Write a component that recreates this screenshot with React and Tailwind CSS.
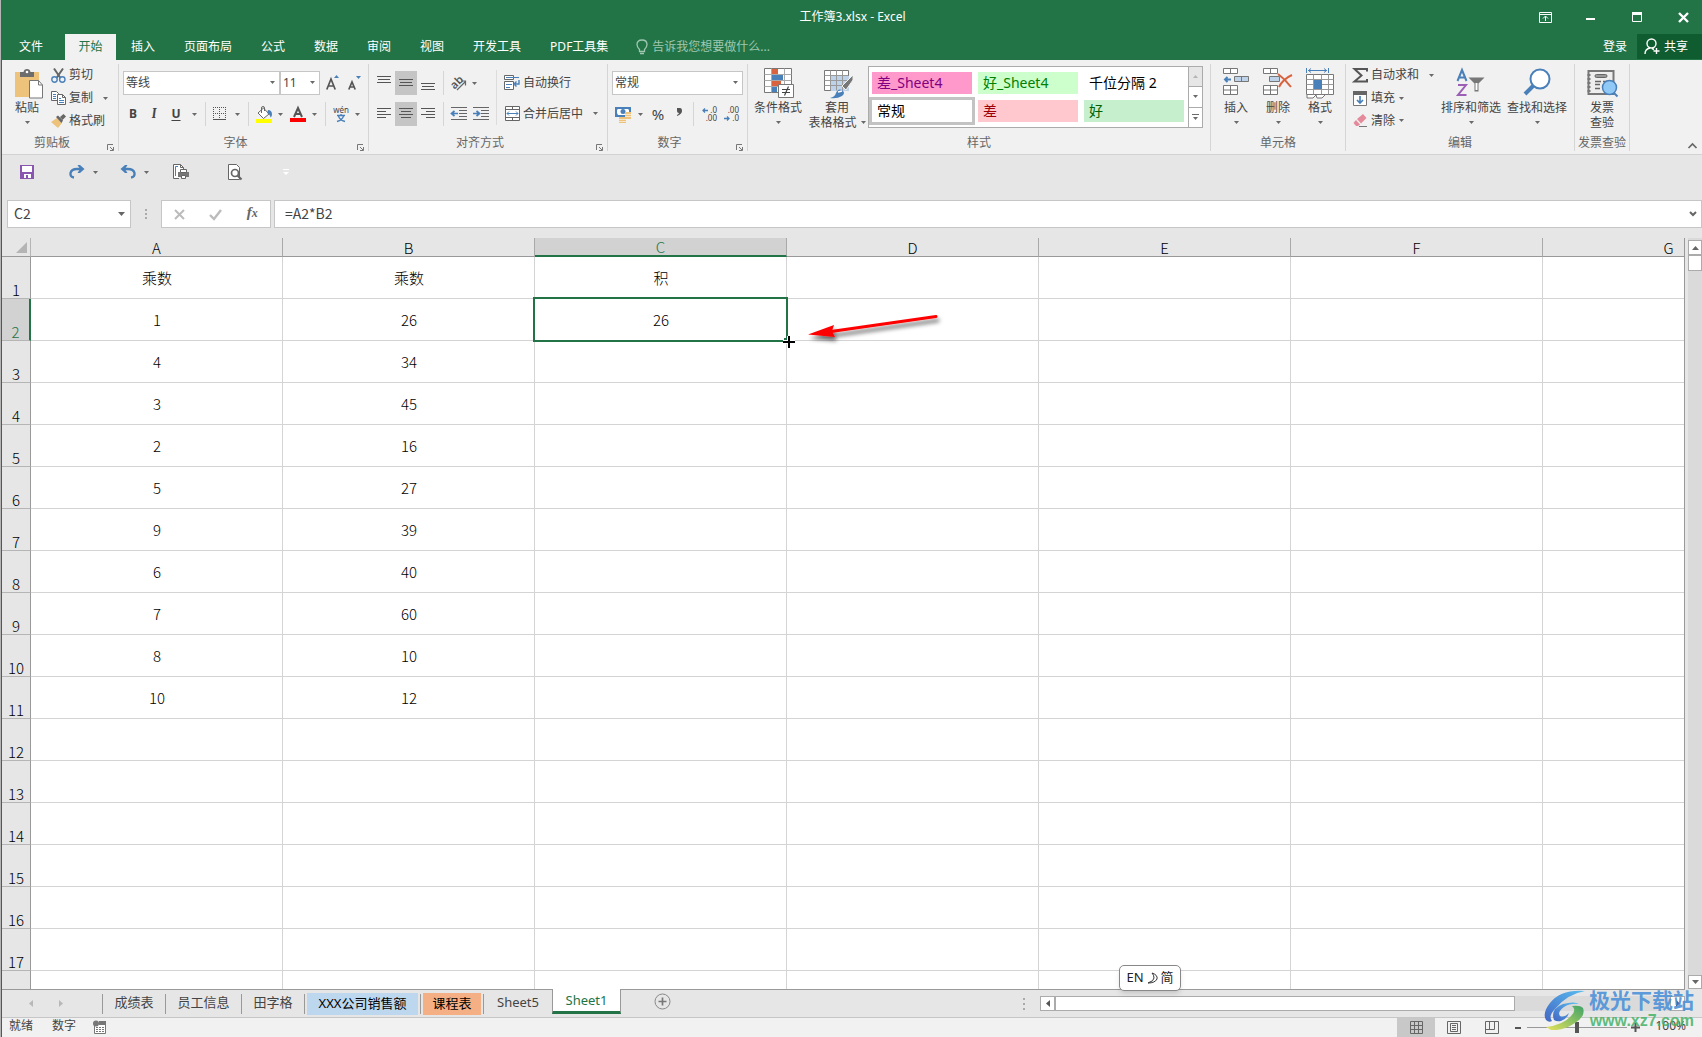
import React from "react";

const COLS = ["A", "B", "C", "D", "E", "F", "G"];
const DATA = [
  ["乘数", "乘数", "积"],
  ["1", "26", "26"],
  ["4", "34"],
  ["3", "45"],
  ["2", "16"],
  ["5", "27"],
  ["9", "39"],
  ["6", "40"],
  ["7", "60"],
  ["8", "10"],
  ["10", "12"],
  [], [], [], [], [], [], [],
];
const TABS = ["插入", "页面布局", "公式", "数据", "审阅", "视图", "开发工具", "PDF工具集"];

function Icon({ w = 16, h = 16, className = "", children }) {
  return (
    <svg width={w} height={h} viewBox={`0 0 ${w} ${h}`} fill="none" aria-hidden="true" className={`shrink-0 overflow-visible ${className}`}>
      {children}
    </svg>
  );
}

function Caret({ className = "" }) {
  return (
    <Icon w={5} h={3} className={className}>
      <path d="M0 0h5L2.5 3z" fill="#6a6a6a" />
    </Icon>
  );
}

function Drop({ label, className = "w-[14px]" }) {
  return (
    <button aria-label={label} className={`flex h-6 shrink-0 items-center justify-center ${className}`}>
      <Caret />
    </button>
  );
}

function Tool({ label, className = "w-[22px]", children }) {
  return (
    <button aria-label={label} className={`flex h-6 shrink-0 items-center justify-center ${className}`}>
      {children}
    </button>
  );
}

function Sep({ className = "mx-1" }) {
  return <span className={`h-6 w-px shrink-0 bg-[#d5d5d5] ${className}`} />;
}

function Group({ title, className, launcher, children }) {
  return (
    <section aria-label={title} className={`mt-1 flex h-[87px] shrink-0 flex-col border-r border-[#d5d5d5] ${className}`}>
      <div className="flex h-[68px]">{children}</div>
      <div className="relative flex h-[19px] items-center justify-center pt-[3px] text-[#666]">
        <span className={launcher ? "-translate-x-2" : ""}>{title}</span>
        {launcher && (
          <button aria-label={`${title}设置`} className="absolute right-1 bottom-0">
            <Icon w={7} h={7}>
              <path d="M.5 6V.5H6M3 3l3 3M6.5 3v3.5H3" stroke="#777" />
            </Icon>
          </button>
        )}
      </div>
    </section>
  );
}

function Big({ icon, lines, className, caret = true, inline = false }) {
  return (
    <button className={`flex shrink-0 flex-col items-center ${className}`}>
      <span className="flex h-9 items-start justify-center pt-1">{icon}</span>
      {lines.map((l, i) => (
        <span key={l} className="flex h-[15px] items-center leading-[15px] whitespace-nowrap">
          {l}
          {inline && i === lines.length - 1 && <Caret className="ml-1" />}
        </span>
      ))}
      {caret && <Caret className="mt-[6px]" />}
    </button>
  );
}

function Small({ icon, label, caret, gap = "ml-1" }) {
  return (
    <button className="flex h-[23px] items-center whitespace-nowrap">
      <span className="mr-[3px] flex w-4 justify-center">{icon}</span>
      {label}
      {caret && <Caret className={gap} />}
    </button>
  );
}

function Lines({ rows }) {
  return (
    <Icon w={14} h={16}>
      {rows.map(([y, x1, x2]) => (
        <path key={y} d={`M${x1} ${y}.5H${x2}`} stroke="#555" />
      ))}
    </Icon>
  );
}

const PasteIcon = (
  <Icon w={28} h={31}>
    <path d="M0 4h24v25H0z" fill="#edc27b" />
    <path d="M5 4h3.500Q9 1 12 1t3.500 3H19v5H5z" fill="#6d6d6d" />
    <circle cx="12" cy="4" r="1.300" fill="#fff" />
    <path d="M14.500 12.500h9l4 4.500v13h-13z" fill="#fff" stroke="#777" />
    <path d="M23.500 12.500V17h4" stroke="#777" />
  </Icon>
);
const CutIcon = (
  <Icon w={15} h={15}>
    <path d="M3 0.500 9.500 10M12 .5 5.500 10" stroke="#666" strokeWidth="2" />
    <circle cx="3.500" cy="11.500" r="2.700" stroke="#4a80b9" strokeWidth="1.400" />
    <circle cx="11.300" cy="11.500" r="2.700" stroke="#4a80b9" strokeWidth="1.400" />
  </Icon>
);
const CopyIcon = (
  <Icon w={15} h={14}>
    <path d="M.5.5h5l2 2v7h-7z" fill="#fff" stroke="#666" />
    <path d="M2 3.500h3M2 5.500h3M2 7.500h3" stroke="#4a80b9" />
    <path d="M6.500 3.500h5l3 3v7h-8z" fill="#fff" stroke="#666" />
    <path d="M11.500 3.500v3h3" stroke="#666" />
    <path d="M8 7.500h2M8 9.500h5M8 11.500h5" stroke="#4a80b9" />
  </Icon>
);
const BrushIcon = (
  <Icon w={15} h={14}>
    <path d="M0 8 6 4l5 5-4 5z" fill="#edc27b" />
    <path d="m5 3 2-1.500 5 5L10.500 9z" fill="#666" />
    <path d="m9 3 3.500-3L15 2.500 11.500 6z" fill="#666" />
  </Icon>
);
const BordersIcon = (
  <Icon w={14} h={14}>
    <path d="M0 .5h13M0 6.500h13M.5 0v12M6.500 0v12M12.500 0v12" stroke="#555" strokeDasharray="1 1" />
    <path d="M0 12.500h13" stroke="#555" />
  </Icon>
);
const FillIcon = (
  <Icon w={16} h={17}>
    <path d="m2 7 5.500-5 5.500 6-5.500 4.500z" fill="#fff" stroke="#666" />
    <path d="M5.500 7V2Q5.500.5 7 .5T8.500 2v3" stroke="#666" />
    <path d="M12 4q4 0 4 4.500 0 2-1.500 3Q14 8 11 7z" fill="#4a80b9" />
    <path d="M0 13h16v4H0z" fill="#ff0" />
  </Icon>
);
const OrientIcon = (
  <Icon w={17} h={16}>
    <text x="1" y="12" transform="rotate(-45 6 9)" fontSize="11" fontWeight="600" fontFamily="Noto Sans" fill="#555">ab</text>
    <path d="M7 15 15.500 6.500M15.500 10.500V6H11" stroke="#666" strokeWidth="1.200" />
  </Icon>
);
const IndentIcon = ({ right }) => (
  <Icon w={16} h={14}>
    <path d="M0 .5h16M8 3.500h8M8 6.500h8M8 9.500h8M0 12.500h16" stroke="#666" />
    {right ? <path d="M0 6.500h6M3.500 4l3 2.500L3.500 9" stroke="#4a80b9" strokeWidth="1.700" /> : <path d="M7 6.500H1M3.500 4l-3 2.500 3 2.500" stroke="#4a80b9" strokeWidth="1.700" />}
  </Icon>
);
const WrapIcon = (
  <Icon w={16} h={16}>
    <path d="M.5.5h9v4h-9zM.5 6.500h9v8h-9z" stroke="#666" fill="#fff" />
    <path d="M2 2.500h13M2 9.500h6M2 12.500h4" stroke="#4a80b9" />
    <path d="M15 5v4h-4M12.500 6.500 10 9l2.500 2.500" stroke="#4a80b9" strokeWidth="1.400" />
  </Icon>
);
const MergeIcon = (
  <Icon w={15} h={15}>
    <path d="M.5.5h14v14H.5zM.5 3.500h14M.5 11.500h14M7.500.5v3M7.500 11.500v3" stroke="#666" fill="#fff" />
    <path d="M2 7.500h11M4 5.500l-2 2 2 2M11 5.500l2 2-2 2" stroke="#4a80b9" />
  </Icon>
);
const MoneyIcon = (
  <Icon w={17} h={17}>
    <path d="M0 1h16v10H0z" fill="#4a80b9" />
    <path d="M3 3h10l1 1v3l-1 2H3L2 7V4z" fill="#fff" />
    <circle cx="8" cy="5.500" r="2.500" fill="#4a80b9" />
    <path d="M10 6h6v7h-6zM4 11h7v6H4z" fill="#edc27b" />
    <path d="M10 8.500h6M10 10.500h6M4 13.500h7M4 15.500h7" stroke="#fff" strokeWidth=".6" />
  </Icon>
);
const DecimalIcon = ({ less }) => (
  <Icon w={16} h={14}>
    <text x="16" y="6" textAnchor="end" fontSize="8" fontFamily="Noto Sans" fill="#444">{less ? ".00" : ".0"}</text>
    <text x="16" y="14" textAnchor="end" fontSize="8" fontFamily="Noto Sans" fill="#444">{less ? ".0" : ".00"}</text>
    {less ? <path d="M1 11.500h5M4 9.500l2 2-2 2" stroke="#4a80b9" strokeWidth="1.300" /> : <path d="M7 3.500H2M4 1.500l-2 2 2 2" stroke="#4a80b9" strokeWidth="1.300" />}
  </Icon>
);
const CondIcon = (
  <Icon w={30} h={30} className="ml-[2px]">
    <path d="M.5.5h27v24H.5z" fill="#fff" stroke="#777" />
    <path d="M8 1h6v5H8zM8 13h9v5H8z" fill="#d9623f" />
    <path d="M8 7h11v5H8zM8 19h5v5H8z" fill="#4a80b9" />
    <path d="M.5 6.500h27M.5 12.500h27M.5 18.500h27M7.500.5v24M20.500.5v24" stroke="#aaa" />
    <path d="M14.500 16.500h15v13h-15z" fill="#fff" stroke="#777" />
    <path d="M18 21.500h8M18 24.500h8M24.500 18.500l-4 9" stroke="#444" strokeWidth="1.200" />
  </Icon>
);
const TableIcon = (
  <Icon w={30} h={29} className="mt-[2px] ml-1">
    <path d="M.5.5h24v20H.5z" fill="#fff" stroke="#777" />
    <path d="M7 6h18v15H7z" fill="#bed3ea" />
    <path d="M.5 5.500h24M.5 10.500h24M.5 15.500h24M6.500.5v20M12.500.5v20M18.500.5v20" stroke="#999" />
    <path d="M29 5 18 16l4 4 7-10z" fill="#777" stroke="#f1f1f1" />
    <path d="M6 28q5-1 6-5 2-5 6-3 4 3 0 6-5 3-12 2z" fill="#4a80b9" />
    <path d="m14 22 4-1" stroke="#fff" strokeWidth="1.500" />
  </Icon>
);
const InsertIcon = (
  <Icon w={26} h={28}>
    <path d="M.5.5h14v5H.5zM7.500.5v5M.5 17.500h14v9H.5zM.5 22h14M7.500 17.500v9" stroke="#777" fill="#fff" />
    <path d="M11.500 8.500h14v5h-14zM18.500 8.500v5" stroke="#777" fill="#bed3ea" />
    <path d="M8 11.500H2M4.500 9 2 11.500 4.500 14" stroke="#4a80b9" strokeWidth="2" />
  </Icon>
);
const DeleteIcon = (
  <Icon w={30} h={28}>
    <path d="M.5.5h14v5H.5zM7.500.5v5M.5 17.500h14v9H.5zM.5 22h14M7.500 17.500v9" stroke="#777" fill="#fff" />
    <path d="M6.500 8.500h10v5h-10z" stroke="#777" fill="#bed3ea" />
    <path d="M15 6q7 5 13 13M29 7q-9 4-13 12" stroke="#d9623f" strokeWidth="2" />
  </Icon>
);
const FormatIcon = (
  <Icon w={28} h={32}>
    <path d="M.5 0v5M22.500 0v5M2 2.500h19M5 .5l-2.500 2L5 4.500M18 .5l2.500 2-2.500 2" stroke="#4a80b9" />
    <path d="M.5 6.500h27v20h-27z" fill="#fff" stroke="#777" />
    <path d="M.5 11.500h27M.5 21.500h27M7.500 6.500v20M15.500 6.500v20M22.500 6.500v20M.5 16.500h27" stroke="#999" />
    <path d="M8 12h8v9H8z" fill="#4a80b9" />
    <path d="M1 27v3h6l3-3 1 3h5l3-3" stroke="#777" fill="#fff" />
  </Icon>
);
const SigmaIcon = (
  <Icon w={15} h={15}>
    <path d="M14 3.500V1H1.500l7 6.500-7 6H14V11" stroke="#555" strokeWidth="2" />
  </Icon>
);
const FillDownIcon = (
  <Icon w={14} h={15}>
    <path d="M.5.5h13v14H.5z" fill="#fff" stroke="#777" />
    <path d="M0 0h14v4H0z" fill="#666" />
    <path d="M7 5v7M4 9l3 3 3-3" stroke="#4a80b9" strokeWidth="1.700" />
  </Icon>
);
const EraserIcon = (
  <Icon w={15} h={13}>
    <path d="m4 5 6-5 3.500 4L8 9.500z" fill="#e58a9a" />
    <path d="m3 6 4 4.500L5 12H3L.5 9z" fill="#e58a9a" />
    <path d="M6 12.500h8" stroke="#777" />
  </Icon>
);
const SortIcon = (
  <Icon w={30} h={28}>
    <path d="M1.500 13 6 2l4.500 11M3 9.500h6" stroke="#4a80b9" strokeWidth="2" />
    <path d="M2 17h8L2 27h8.500" stroke="#9b5fb5" strokeWidth="2" />
    <path d="M12.500 9.500h16l-6 6v8h-4v-8z" fill="#777" />
    <path d="M19.500 15h2v7h-2z" fill="#fff" />
  </Icon>
);
const FindIcon = (
  <Icon w={28} h={28}>
    <path d="M11 17 2 26" stroke="#4a80b9" strokeWidth="4" />
    <circle cx="17" cy="11" r="9.500" fill="#fff" stroke="#4a80b9" strokeWidth="2" />
  </Icon>
);
const InvoiceIcon = (
  <Icon w={31} h={28} className="mt-px">
    <path d="M1.500 2h25v23h-25z" fill="#eee" stroke="#777" strokeWidth="2" />
    <path d="M2 5v18" stroke="#777" strokeWidth="3" strokeDasharray="2 2" />
    <rect x="8" y="5.500" width="12" height="3" rx="1.500" fill="#999" stroke="#666" />
    <path d="M8 12.500h6M16 12.500h4M8 15.500h5M8 19.500h5" stroke="#666" strokeWidth="1.500" />
    <circle cx="22.500" cy="18.500" r="7" fill="#90c8f6" stroke="#4a80b9" strokeWidth="1.500" />
    <path d="m27 24 3.500 3.500" stroke="#4a80b9" strokeWidth="2" />
  </Icon>
);

function TitleBar() {
  return (
    <div className="bg-[#227447] text-white">
      <div className="grid h-[34px] grid-cols-[1fr_auto_1fr] items-center">
        <span />
        <h1 className="pl-[2px] text-[12px]">工作簿3.xlsx - Excel</h1>
        <div className="flex items-center justify-end">
          <button aria-label="功能区显示选项" className="flex w-[46px] justify-center">
            <Icon w={13} h={11}>
              <path d="M.5.5h12v10H.5zM.5 2.500h12M6.500 9V4.500M4 6.500 6.500 4 9 6.500" stroke="#fff" />
            </Icon>
          </button>
          <button aria-label="最小化" className="flex w-[46px] justify-center">
            <Icon w={10} h={10}><path d="M0 7h9" stroke="#fff" strokeWidth="2" /></Icon>
          </button>
          <button aria-label="最大化" className="flex w-[46px] justify-center">
            <Icon w={10} h={10}><path d="M.5.5h9v9h-9z" stroke="#fff" /><path d="M0 1.500h10" stroke="#fff" strokeWidth="3" /></Icon>
          </button>
          <button aria-label="关闭" className="ml-1 flex w-[38px] justify-center">
            <Icon w={11} h={11}><path d="m1 1 9 9M10 1l-9 9" stroke="#fff" strokeWidth="2.400" /></Icon>
          </button>
        </div>
      </div>
      <div className="flex h-[26px] items-stretch">
        <button className="w-16 pr-1">文件</button>
        <button className="w-[51px] bg-[#f1f1f1] text-[#227447]">开始</button>
        <nav className="flex items-stretch gap-px pl-px">
          {TABS.map((t) => (
            <button key={t} className="px-[14px] whitespace-nowrap">{t}</button>
          ))}
        </nav>
        <label className="ml-[14px] flex items-center gap-1 text-[#9fc7b0]">
          <Icon w={12} h={16}>
            <path d="M3.500 10.500Q1 8 1 5.500 1 1 6 1t5 4.500Q11 8 8.500 10.500v2h-5z" stroke="#9fc7b0" strokeWidth="1.300" />
            <path d="M4 14.500h4" stroke="#9fc7b0" strokeWidth="1.500" />
          </Icon>
          <input aria-label="告诉我您想要做什么" placeholder="告诉我您想要做什么..." className="w-40 bg-transparent outline-none placeholder:text-[#9fc7b0]" />
        </label>
        <div className="ml-auto flex items-stretch">
          <button className="px-[10px]">登录</button>
          <button className="mb-px flex w-[65px] items-center gap-1 bg-[#0e5c2f] pl-[7px]">
            <Icon w={16} h={17}>
              <circle cx="7.500" cy="5.500" r="4.500" stroke="#fff" strokeWidth="1.400" />
              <path d="M1 16q0-5 5-6M8 10.500l2 1M12.500 10v6M9.500 13h6" stroke="#fff" strokeWidth="1.400" />
            </Icon>
            共享
          </button>
        </div>
      </div>
    </div>
  );
}

const boxSelect = "h-6 w-full appearance-none border border-[#c6c6c6] bg-white px-[2px] text-[12px] text-[#444] outline-none";

function Combo({ label, value, className }) {
  return (
    <div className={`relative ${className}`}>
      <select aria-label={label} className={boxSelect} defaultValue={value}>
        <option>{value}</option>
      </select>
      <Caret className="pointer-events-none absolute top-[10px] right-[5px]" />
    </div>
  );
}

const GALLERY = [
  ["差_Sheet4", "bg-[#ff99cc] text-[#800080]"],
  ["好_Sheet4", "bg-[#ccffcc] text-[#008000]"],
  ["千位分隔 2", "bg-white text-black"],
  ["常规", "bg-white text-black outline-3 outline-[#c3c3c3]"],
  ["差", "bg-[#ffc7ce] text-[#9c0006]"],
  ["好", "bg-[#c6efce] text-[#006100]"],
];

function Ribbon() {
  return (
    <div className="flex h-[95px] overflow-hidden border-b border-[#d2d2d2] bg-[#f1f1f1]">
      <Group title="剪贴板" launcher className="w-[117px]">
        <Big icon={<span className="pl-1">{PasteIcon}</span>} lines={["粘贴"]} className="ml-[6px] w-[38px]" />
        <div className="ml-1 flex flex-col items-start">
          <Small icon={CutIcon} label="剪切" />
          <Small icon={CopyIcon} label="复制" caret gap="ml-[10px]" />
          <Small icon={BrushIcon} label="格式刷" />
        </div>
      </Group>

      <Group title="字体" launcher className="w-[250px]">
        <div className="flex flex-col gap-[7px] pt-[7px] pl-1">
          <div className="flex">
            <Combo label="字体" value="等线" className="w-[157px]" />
            <Combo label="字号" value="11" className="w-10" />
            <Tool label="增大字号" className="ml-[2px] w-5">
              <Icon w={13} h={16}>
                <path d="M.8 14.500 5 4l4.200 10.500M2.500 11h5.200" stroke="#555" strokeWidth="1.700" />
                <path d="m8 3 2.500-3L13 3z" fill="#4a80b9" />
              </Icon>
            </Tool>
            <Tool label="减小字号" className="ml-[2px] w-5">
              <Icon w={13} h={16}>
                <path d="M.8 14.500 4 7l3.200 7.500M2 12h4" stroke="#555" strokeWidth="1.700" />
                <path d="m8 1 2.500 3L13 1z" fill="#4a80b9" />
              </Icon>
            </Tool>
          </div>
          <div className="flex">
            <Tool label="加粗" className="w-5"><b>B</b></Tool>
            <Tool label="倾斜"><i className="font-serif text-[13px] font-bold">I</i></Tool>
            <Tool label="下划线"><u className="font-bold underline-offset-2">U</u></Tool>
            <Drop label="下划线类型" />
            <Sep className="mr-1 ml-1" />
            <Tool label="边框" className="w-5">{BordersIcon}</Tool>
            <Drop label="边框类型" />
            <Sep className="mr-[5px] ml-1" />
            <Tool label="填充颜色" className="w-5">{FillIcon}</Tool>
            <Drop label="填充颜色列表" className="w-[13px]" />
            <Tool label="字体颜色" className="ml-px w-5">
              <Icon w={16} h={15}>
                <path d="m4 10 4-9 4 9M5.500 7h5" stroke="#555" strokeWidth="2" />
                <path d="M0 11h16v4H0z" fill="#f00" />
              </Icon>
            </Tool>
            <Drop label="字体颜色列表" className="w-[13px]" />
            <Sep className="mr-[5px] ml-1" />
            <Tool label="拼音" className="w-5">
              <Icon w={16} h={16}>
                <text x="8" y="7" textAnchor="middle" fontSize="8" fontFamily="Noto Sans" fill="#444">wén</text>
                <path d="M4 9.500h8M8 8v2M5.500 10q1 4 6.500 5.500M10.500 10q-1 4-6.500 5.500" stroke="#4a80b9" strokeWidth="1.300" />
              </Icon>
            </Tool>
            <Drop label="拼音选项" className="w-[13px]" />
          </div>
        </div>
      </Group>

      <Group title="对齐方式" launcher className="w-[239px]">
        <div className="flex flex-col gap-[7px] pt-[7px] pl-1">
          <div className="flex">
            <Tool label="顶端对齐"><Lines rows={[[1, 0, 14], [4, 1, 13], [7, 0, 14]]} /></Tool>
            <Tool label="垂直居中" className="w-[22px] bg-[#c5c5c5]"><Lines rows={[[4, 0, 14], [7, 1, 13], [10, 0, 14]]} /></Tool>
            <Tool label="底端对齐"><Lines rows={[[8, 0, 14], [11, 1, 13], [14, 0, 14]]} /></Tool>
            <Sep className="mx-1" />
            <Tool label="方向" className="w-5">{OrientIcon}</Tool>
            <Drop label="方向列表" className="w-[13px]" />
          </div>
          <div className="flex">
            <Tool label="左对齐"><Lines rows={[[2, 0, 14], [5, 0, 9], [8, 0, 14], [11, 0, 9]]} /></Tool>
            <Tool label="居中" className="w-[22px] bg-[#c5c5c5]"><Lines rows={[[2, 0, 14], [5, 2, 12], [8, 0, 14], [11, 2, 12]]} /></Tool>
            <Tool label="右对齐"><Lines rows={[[2, 0, 14], [5, 5, 14], [8, 0, 14], [11, 5, 14]]} /></Tool>
            <Sep className="mx-1" />
            <Tool label="减少缩进"><IndentIcon /></Tool>
            <Tool label="增加缩进"><IndentIcon right /></Tool>
          </div>
        </div>
        <span className="mt-[6px] ml-1 h-[55px] w-px bg-[#dcdcdc]" />
        <div className="ml-[7px] flex flex-col items-start gap-2 pt-[7px]">
          <Small icon={WrapIcon} label="自动换行" />
          <Small icon={MergeIcon} label="合并后居中" caret gap="ml-[10px]" />
        </div>
      </Group>

      <Group title="数字" launcher className="w-[140px]">
        <div className="flex flex-col gap-[7px] pt-[7px] pl-1">
          <Combo label="数字格式" value="常规" className="w-[131px]" />
          <div className="flex">
            <Tool label="会计数字格式">{MoneyIcon}</Tool>
            <Drop label="货币列表" className="w-[13px]" />
            <Tool label="百分比"><span className="text-[15px]">%</span></Tool>
            <Tool label="千位分隔" className="w-5">
              <Icon w={6} h={9} className="-mt-1"><path d="M1 0h3q2 0 2 3 0 3-5 5v-1q2-1 2-2-2 0-2-2z" fill="#555" /></Icon>
            </Tool>
            <Sep className="mr-1 ml-1" />
            <Tool label="增加小数位数"><DecimalIcon /></Tool>
            <Tool label="减少小数位数"><DecimalIcon less /></Tool>
          </div>
        </div>
      </Group>

      <Group title="样式" className="w-[463px]">
        <Big icon={CondIcon} lines={["条件格式"]} className="ml-[2px] w-14" />
        <Big icon={TableIcon} lines={["套用", "表格格式"]} inline caret={false} className="w-[62px]" />
        <div className="mt-[2px] flex h-[62px] border border-[#ababab] bg-white">
          <div className="grid grid-cols-3 gap-[6px] py-[5px] pr-1 pl-[3px]">
            {GALLERY.map(([t, c]) => (
              <button key={t} className={`flex h-[22px] w-[100px] items-center pl-[5px] text-[14px] leading-[22px] ${c}`}>{t}</button>
            ))}
          </div>
          <div className="flex w-[14px] flex-col divide-y divide-[#ababab] border-l border-[#ababab]">
            <button aria-label="上一行" className="flex flex-1 items-center justify-center bg-[#e6e6e6]"><Caret className="rotate-180 opacity-40" /></button>
            <button aria-label="下一行" className="flex flex-1 items-center justify-center"><Caret /></button>
            <button aria-label="其他样式" className="flex flex-1 items-center justify-center">
              <Icon w={7} h={7}><path d="M0 .5h7" stroke="#6a6a6a" /><path d="M1 3h5L3.500 6z" fill="#6a6a6a" /></Icon>
            </button>
          </div>
        </div>
      </Group>

      <Group title="单元格" className="w-[135px]">
        <Big icon={InsertIcon} lines={["插入"]} className="ml-1 w-[42px]" />
        <Big icon={DeleteIcon} lines={["删除"]} className="w-[42px]" />
        <Big icon={FormatIcon} lines={["格式"]} className="w-[42px]" />
      </Group>

      <Group title="编辑" className="w-[229px]">
        <div className="ml-[6px] flex w-[86px] flex-col items-start">
          <Small icon={SigmaIcon} label="自动求和" caret gap="ml-[10px]" />
          <Small icon={FillDownIcon} label="填充" caret />
          <Small icon={EraserIcon} label="清除" caret />
        </div>
        <Big icon={SortIcon} lines={["排序和筛选"]} className="w-[66px]" />
        <Big icon={FindIcon} lines={["查找和选择"]} className="w-[66px]" />
      </Group>

      <Group title="发票查验" className="w-[55px]">
        <Big icon={InvoiceIcon} lines={["发票", "查验"]} caret={false} className="w-[54px]" />
      </Group>

      <button aria-label="折叠功能区" className="ml-auto self-end p-[5px]">
        <Icon w={9} h={6}><path d="m.5 5 4-4 4 4" stroke="#666" strokeWidth="1.700" /></Icon>
      </button>
    </div>
  );
}

function QuickAccess() {
  return (
    <div className="flex h-[34px] items-center pl-[18px]">
      <button aria-label="保存">
        <Icon w={14} h={14}>
          <path d="M0 0h14v14H0z" fill="#8a56b0" />
          <path d="M2 1h10v6H2zM4 9h7v4H8v-3H6v3H4z" fill="#fff" />
        </Icon>
      </button>
      <button aria-label="恢复" className="ml-[35px]">
        <Icon w={16} h={14}>
          <path d="M5 12.500Q1 12 1.500 8 2.500 4 8 4h5" stroke="#4a80b9" strokeWidth="2.400" />
          <path d="M8.500 0H11l4.500 4L11 8H8.500l2.500-4z" fill="#4a80b9" />
        </Icon>
      </button>
      <Drop label="恢复列表" className="ml-[3px] w-[14px]" />
      <button aria-label="撤消" className="ml-[18px]">
        <Icon w={16} h={14}>
          <path d="M11 12.500q4-.5 3.500-4.500Q13.500 4 8 4H3" stroke="#4a80b9" strokeWidth="2.400" />
          <path d="M7.500 0H5L.5 4 5 8h2.500L5 4z" fill="#4a80b9" />
        </Icon>
      </button>
      <Drop label="撤消列表" className="ml-[3px] w-[14px]" />
      <button aria-label="快速打印" className="ml-[20px]">
        <Icon w={17} h={16}>
          <path d="M6 14.500H.5V.5h7l3 3V6" stroke="#666" fill="#fff" />
          <path d="M5 2.500H2.500V12" stroke="#4a80b9" />
          <path d="M7.500.5v3h3" stroke="#666" />
          <path d="M5 8h11v5H5z" fill="#777" />
          <path d="M7.500 5.500h6v3h-6zM8.500 11.500h4v3h-4z" fill="#fff" stroke="#666" />
        </Icon>
      </button>
      <button aria-label="打印预览" className="ml-[38px]">
        <Icon w={15} h={16}>
          <path d="M.5.5h8l3 3v12H.5z" fill="#fff" stroke="#666" />
          <circle cx="7" cy="9" r="3.500" fill="#fff" stroke="#666" strokeWidth="1.700" />
          <path d="m9.500 11.500 4 4" stroke="#666" strokeWidth="2.200" />
        </Icon>
      </button>
      <button aria-label="自定义快速访问工具栏" className="ml-10">
        <Icon w={6} h={7}><path d="M0 .5h6" stroke="#fff" /><path d="M0 3h6L3 6z" fill="#fff" /></Icon>
      </button>
    </div>
  );
}

function FormulaBar() {
  return (
    <div className="mt-[11px] flex h-7 text-[14px] text-[#444]">
      <div className="ml-[5px] flex w-[124px] items-center border border-[#c6c6c6] bg-white pr-[5px] pl-[6px]">
        <input aria-label="名称框" defaultValue="C2" className="w-full bg-transparent pb-px outline-none" />
        <button aria-label="名称列表"><Icon w={7} h={4}><path d="M0 0h7L3.500 4z" fill="#666" /></Icon></button>
      </div>
      <span className="flex w-[30px] items-center justify-center">
        <Icon w={2} h={10}><path d="M0 0h2v2H0zM0 4h2v2H0zM0 8h2v2H0z" fill="#aaa" /></Icon>
      </span>
      <div className="flex w-[110px] items-center justify-around border border-[#c6c6c6] bg-white">
        <button aria-label="取消"><Icon w={11} h={11}><path d="m1 1 9 9M10 1l-9 9" stroke="#bbb" strokeWidth="2" /></Icon></button>
        <button aria-label="输入"><Icon w={13} h={11}><path d="m1 6 4 4 7-9" stroke="#bbb" strokeWidth="2.400" /></Icon></button>
        <button aria-label="插入函数" className="pb-1 font-['Liberation_Serif'] text-[15px] leading-none font-bold text-[#666] italic">f<span className="text-[12px]">x</span></button>
      </div>
      <div className="ml-[3px] flex flex-1 items-center border border-[#c6c6c6] bg-white pr-1 pl-[10px]">
        <input aria-label="编辑栏" defaultValue="=A2*B2" className="w-full bg-transparent pb-px outline-none" />
        <button aria-label="展开编辑栏"><Icon w={8} h={6}><path d="m1 1 3 3 3-3" stroke="#666" strokeWidth="2" /></Icon></button>
      </div>
    </div>
  );
}

function Selection() {
  return (
    <>
      <span className="pointer-events-none absolute -inset-[2px] z-10 border-2 border-[#227447]" />
      <svg width="170" height="60" viewBox="0 0 170 60" aria-hidden="true" className="absolute top-0 left-full z-20 max-w-none overflow-visible">
        <defs>
          <filter id="soft" x="-10%" y="-50%" width="120%" height="220%">
            <feDropShadow dx="2" dy="4" stdDeviation="2" floodColor="#000" floodOpacity="0.6" />
          </filter>
        </defs>
        <g filter="url(#soft)">
          <path d="M45 32.500 150 17.500" stroke="#fe0000" strokeWidth="3" strokeLinecap="round" />
          <path d="M22 35.500 48 26l-2 6 3 6z" fill="#fe0000" />
        </g>
        <path d="M-3 43H9M3 37v12" stroke="#fff" strokeWidth="4" />
        <path d="M-3 43H9M3 37v12" stroke="#000" strokeWidth="2" />
        <path d="M-2 39h3v2h-3z" fill="#227447" />
      </svg>
    </>
  );
}

function Grid() {
  return (
    <div className="mt-[10px] flex min-h-0 flex-1">
      <div className="min-w-0 flex-1 overflow-hidden border-r border-[#999]">
        <table className="w-[1793px] table-fixed border-separate border-spacing-0 text-center text-[15px] leading-none font-light text-black">
          <colgroup>
            <col className="w-[29px]" />
            {COLS.map((c) => <col key={c} className="w-[252px]" />)}
          </colgroup>
          <thead>
            <tr className="h-[19px]">
              <th className="border-r border-b border-r-[#b5b5b5] border-b-[#999] p-0" aria-label="全选">
                <Icon w={11} h={11} className="mt-px mr-[3px] ml-auto"><path d="M11 0v11H0z" fill="#b4b4b4" /></Icon>
              </th>
              {COLS.map((c) => (
                <th
                  key={c}
                  scope="col"
                  className={
                    c === "C"
                      ? "border-r border-b-2 border-r-[#a9a9a9] border-b-[#227447] bg-[#d2d2d2] p-0 font-light text-[#227447]"
                      : "border-r border-b border-r-[#a9a9a9] border-b-[#999] p-0 font-light"
                  }
                >
                  <span className="block h-[15px] leading-[16px]">{c}</span>
                </th>
              ))}
            </tr>
          </thead>
          <tbody>
            {DATA.map((row, r) => (
              <tr key={r} className="h-[42px]">
                <th
                  scope="row"
                  className={
                    r === 1
                      ? "border-r-2 border-b border-r-[#227447] border-b-[#b5b5b5] bg-[#d2d2d2] p-0 align-bottom font-light text-[#227447]"
                      : "border-r border-b border-r-[#999] border-b-[#b5b5b5] p-0 align-bottom font-light"
                  }
                >
                  <span className="block leading-4">{r + 1}</span>
                </th>
                {COLS.map((c, i) => (
                  <td key={c} className="relative border-r border-b border-[#d4d4d4] bg-white p-0 pb-px pl-px">
                    {row[i]}
                    {r === 1 && c === "C" && <Selection />}
                  </td>
                ))}
              </tr>
            ))}
          </tbody>
        </table>
      </div>
      <div className="ml-[3px] flex w-[14px] flex-col bg-[#dadada] pt-[2px]">
        <button aria-label="向上滚动" className="flex h-[15px] items-center justify-center border border-[#ababab] bg-white"><Icon w={7} h={4}><path d="M0 4h7L3.500 0z" fill="#666" /></Icon></button>
        <div className="h-4 border border-[#ababab] bg-white" />
        <button aria-label="向下滚动" className="mt-auto flex h-[14px] items-center justify-center border border-[#ababab] bg-white"><Icon w={7} h={4}><path d="M0 0h7L3.500 4z" fill="#666" /></Icon></button>
      </div>
    </div>
  );
}

function SheetBar() {
  const tab = "mt-1 flex h-5 items-center justify-center border-l border-[#999] pb-[3px] whitespace-nowrap";
  return (
    <div className="flex h-[29px] shrink-0 border-b border-[#c6c6c6] text-[13px] text-[#444]">
      <div className="flex min-w-0 flex-1 border-t border-[#999]">
        <button aria-label="上一个工作表" className="flex w-[57px] items-center justify-center"><Icon w={4} h={7}><path d="M4 0v7L0 3.500z" fill="#b8b8b8" /></Icon></button>
        <button aria-label="下一个工作表" className="mr-[39px] w-1"><Icon w={4} h={7}><path d="M0 0v7l4-3.500z" fill="#b8b8b8" /></Icon></button>
        <button className={`${tab} w-[63px]`}>成绩表</button>
        <button className={`${tab} w-[76px]`}>员工信息</button>
        <button className={`${tab} w-[63px]`}>田字格</button>
        <span className="mt-1 flex h-5 w-[116px] items-center justify-center border-l border-[#999]">
          <button className="h-[22px] w-[111px] shrink-0 bg-[#bdd7ee] pb-[2px] leading-5 text-black">XXX公司销售额</button>
        </span>
        <span className="mt-1 flex h-5 w-[63px] items-center justify-center border-l border-[#999]">
          <button className="h-[22px] w-[58px] shrink-0 bg-[#f4b084] pb-[2px] leading-5 text-black">课程表</button>
        </span>
        <button className={`${tab} w-[69px]`}>Sheet5</button>
        <button className="-mt-px mb-[3px] w-[69px] border-x border-b-3 border-x-[#999] border-b-[#227447] bg-white pt-px text-[#227447]">Sheet1</button>
        <button aria-label="新工作表" className="mb-1 ml-[33px]">
          <Icon w={17} h={17}><circle cx="8.500" cy="8.500" r="7.500" stroke="#888" /><path d="M4.500 8.500h8M8.500 4.500v8" stroke="#777" strokeWidth="1.700" /></Icon>
        </button>
        <span className="ml-auto flex w-8 items-center justify-center"><Icon w={2} h={12}><path d="M0 0h2v2H0zM0 5h2v2H0zM0 10h2v2H0z" fill="#aaa" /></Icon></span>
        <div className="mt-[6px] flex h-[15px] w-[645px] bg-[#dadada]">
          <button aria-label="向左滚动" className="flex w-[15px] items-center justify-center border border-[#ababab] bg-white"><Icon w={4} h={7}><path d="M4 0v7L0 3.500z" fill="#555" /></Icon></button>
          <div className="w-[460px] border border-[#ababab] bg-white" />
          <button aria-label="向右滚动" className="ml-auto flex w-[15px] items-center justify-center border border-[#ababab] bg-white"><Icon w={4} h={7}><path d="M0 0v7l4-3.500z" fill="#555" /></Icon></button>
        </div>
      </div>
      <div className="w-[17px]" />
    </div>
  );
}

function StatusBar() {
  return (
    <div className="flex h-[19px] shrink-0 items-center bg-[#f1f1f1] text-[#444]">
      <span className="ml-[7px] pb-[3px]">就绪</span>
      <span className="ml-[19px] pb-[3px]">数字</span>
      <button aria-label="宏录制" className="ml-[17px]">
        <Icon w={13} h={13}>
          <path d="M1.500 4v8.500h11V4" stroke="#777" fill="#fff" />
          <path d="M6 0h7v4H6z" fill="#777" />
          <circle cx="3" cy="2.500" r="3" fill="#777" />
          <path d="M3 6.500h8M3 8.500h8M3 10.500h8" stroke="#777" strokeDasharray="2 1" />
        </Icon>
      </button>
      <div className="mr-4 ml-auto flex h-full items-center">
        <button aria-label="普通" className="flex h-full w-[38px] items-center justify-center bg-[#c8c8c8]"><Icon w={13} h={13}><path d="M.5.5h12v12H.5zM.5 4.500h12M.5 8.500h12M4.500.5v12M8.500.5v12" stroke="#666" /></Icon></button>
        <button aria-label="页面布局视图" className="flex w-[38px] justify-center"><Icon w={14} h={13}><path d="M.5.5h13v12H.5zM3.500 2.500h7v8h-7zM5 4.500h4M5 6.500h4M5 8.500h4" stroke="#666" /></Icon></button>
        <button aria-label="分页预览" className="flex w-[38px] justify-center"><Icon w={14} h={13}><path d="M.5.5h13v12H.5zM4.500.5v8M9.500.5v8M.5 8.500h9" stroke="#666" /></Icon></button>
        <button aria-label="缩小" className="ml-1 w-2"><Icon w={6} h={10}><path d="M0 5h6" stroke="#555" strokeWidth="2" /></Icon></button>
        <input
          type="range"
          aria-label="显示比例"
          defaultValue="50"
          className="mx-1 h-3 w-[100px] appearance-none bg-[linear-gradient(#999,#999)] bg-[length:100%_1px] bg-center bg-no-repeat [&::-webkit-slider-thumb]:h-[11px] [&::-webkit-slider-thumb]:w-1 [&::-webkit-slider-thumb]:appearance-none [&::-webkit-slider-thumb]:bg-[#555]"
        />
        <button aria-label="放大" className="w-[10px]"><Icon w={9} h={9}><path d="M0 4.500h9M4.500 0v9" stroke="#555" strokeWidth="2" /></Icon></button>
        <button className="ml-[14px] pb-[3px]">100%</button>
      </div>
    </div>
  );
}

function Watermark() {
  return (
    <div className="pointer-events-none absolute right-[8px] bottom-[7px] flex items-end gap-[2px]">
      <svg width="44" height="40" viewBox="0 0 44 40" aria-hidden="true">
        <defs>
          <linearGradient id="wb" x1="0" y1="1" x2="1" y2="0"><stop stopColor="#4467c4" /><stop offset="1" stopColor="#58bdf0" /></linearGradient>
          <linearGradient id="wg" x1="0" y1="1" x2="1" y2="0"><stop stopColor="#e6e25c" /><stop offset="1" stopColor="#3fa368" /></linearGradient>
        </defs>
        <path d="M42 1Q18-1 7 13-1 23 3 30q3 3 6 1-4-5 3-12Q24 4 42 1z" fill="url(#wb)" />
        <path d="M11 30q-4-11 9-16 12-3 16 0-9-1-15 3-7 5-4 9 4 2 9-3-2 6-8 8-4 1-7-1z" fill="url(#wb)" />
        <path d="M3 37q17-2 25-11 6-6 1-10 8-1 11 2 3 8-8 15-12 8-24 7z" fill="url(#wg)" />
      </svg>
      <div className="flex flex-col items-end leading-none">
        <span className="text-[21px] leading-[24px] font-bold text-[#4a90d9]/90">极光下载站</span>
        <span className="font-['Liberation_Sans'] text-[16px] leading-[18px] font-bold text-[#44b268]/85">www.xz7.com</span>
      </div>
    </div>
  );
}

export default function App() {
  return (
    <div className="relative flex h-screen w-full flex-col overflow-hidden border-l border-[#b5b5b5] bg-[#e6e6e6] font-['Noto_Sans','Noto_Sans_CJK_SC',sans-serif] text-[12px] text-[#444]">
      <TitleBar />
      <div className="flex min-h-0 flex-1 flex-col border-l border-[#227447]">
        <Ribbon />
        <QuickAccess />
        <div className="flex min-h-0 flex-1 flex-col font-['Noto_Sans_CJK_SC',sans-serif]">
          <FormulaBar />
          <Grid />
        </div>
        <SheetBar />
        <StatusBar />
      </div>
      <div className="absolute right-[521px] bottom-[46px] flex h-[26px] w-[62px] items-center justify-center gap-[3px] rounded-[5px] border border-[#888] bg-white text-[13px] text-[#222] shadow-md">
        EN
        <Icon w={11} h={12}><path d="M5 1q6 2 5 6-2 4-9 4 6-2 6-5 0-3-2-5z" stroke="#333" /></Icon>
        简
      </div>
      <Watermark />
    </div>
  );
}
